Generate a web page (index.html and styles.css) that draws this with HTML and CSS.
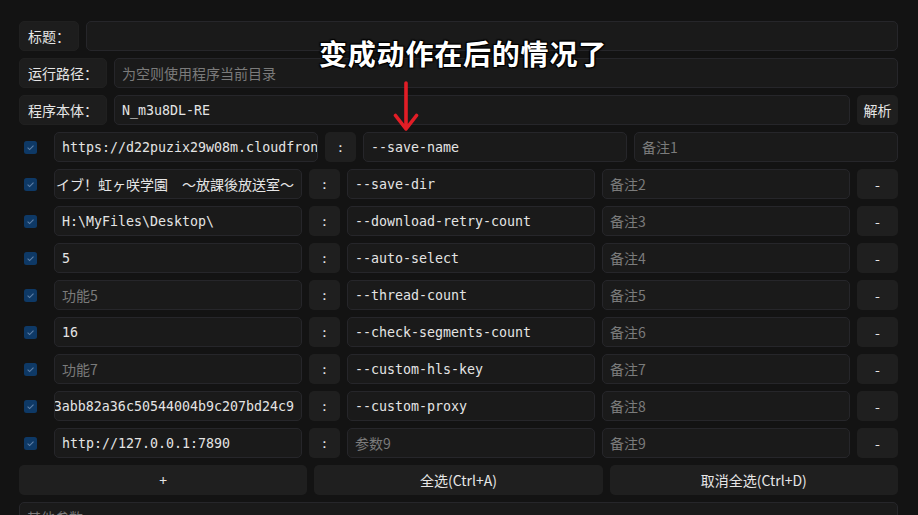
FILE: index.html
```html
<!DOCTYPE html>
<html lang="zh">
<head>
<meta charset="utf-8">
<link rel="stylesheet" href="styles.css">
</head>
<body>
<div class="app">
  <div class="row">
    <div class="label">标题：</div>
    <div class="field"></div>
  </div>
  <div class="row">
    <div class="label">运行路径：</div>
    <div class="field ph">为空则使用程序当前目录</div>
  </div>
  <div class="row">
    <div class="label">程序本体：</div>
    <div class="field mono">N_m3u8DL-RE</div>
    <div class="btn side">解析</div>
  </div>

  <div class="row">
    <div class="check"><svg width="13" height="13" viewBox="0 0 13 13"><rect width="13" height="13" rx="2.5" fill="#0e3966"/><path d="M3.6 6.7 L5.6 8.6 L9.5 4.6" fill="none" stroke="#5f80a8" stroke-width="1.1"/></svg></div>
    <div class="field mono">https://d22puzix29w08m.cloudfront.net/</div>
    <div class="btn colon">:</div>
    <div class="field mono">--save-name</div>
    <div class="field ph">备注1</div>
  </div>
  <div class="row">
    <div class="check"><svg width="13" height="13" viewBox="0 0 13 13"><rect width="13" height="13" rx="2.5" fill="#0e3966"/><path d="M3.6 6.7 L5.6 8.6 L9.5 4.6" fill="none" stroke="#5f80a8" stroke-width="1.1"/></svg></div>
    <div class="field end"><span class="cjk">ラブライブ！虹ヶ咲学園　～放課後放送室～</span></div>
    <div class="btn colon">:</div>
    <div class="field mono">--save-dir</div>
    <div class="field ph">备注2</div>
    <div class="btn side">-</div>
  </div>
  <div class="row">
    <div class="check"><svg width="13" height="13" viewBox="0 0 13 13"><rect width="13" height="13" rx="2.5" fill="#0e3966"/><path d="M3.6 6.7 L5.6 8.6 L9.5 4.6" fill="none" stroke="#5f80a8" stroke-width="1.1"/></svg></div>
    <div class="field mono">H:\MyFiles\Desktop\</div>
    <div class="btn colon">:</div>
    <div class="field mono">--download-retry-count</div>
    <div class="field ph">备注3</div>
    <div class="btn side">-</div>
  </div>
  <div class="row">
    <div class="check"><svg width="13" height="13" viewBox="0 0 13 13"><rect width="13" height="13" rx="2.5" fill="#0e3966"/><path d="M3.6 6.7 L5.6 8.6 L9.5 4.6" fill="none" stroke="#5f80a8" stroke-width="1.1"/></svg></div>
    <div class="field mono">5</div>
    <div class="btn colon">:</div>
    <div class="field mono">--auto-select</div>
    <div class="field ph">备注4</div>
    <div class="btn side">-</div>
  </div>
  <div class="row">
    <div class="check"><svg width="13" height="13" viewBox="0 0 13 13"><rect width="13" height="13" rx="2.5" fill="#0e3966"/><path d="M3.6 6.7 L5.6 8.6 L9.5 4.6" fill="none" stroke="#5f80a8" stroke-width="1.1"/></svg></div>
    <div class="field ph">功能5</div>
    <div class="btn colon">:</div>
    <div class="field mono">--thread-count</div>
    <div class="field ph">备注5</div>
    <div class="btn side">-</div>
  </div>
  <div class="row">
    <div class="check"><svg width="13" height="13" viewBox="0 0 13 13"><rect width="13" height="13" rx="2.5" fill="#0e3966"/><path d="M3.6 6.7 L5.6 8.6 L9.5 4.6" fill="none" stroke="#5f80a8" stroke-width="1.1"/></svg></div>
    <div class="field mono">16</div>
    <div class="btn colon">:</div>
    <div class="field mono">--check-segments-count</div>
    <div class="field ph">备注6</div>
    <div class="btn side">-</div>
  </div>
  <div class="row">
    <div class="check"><svg width="13" height="13" viewBox="0 0 13 13"><rect width="13" height="13" rx="2.5" fill="#0e3966"/><path d="M3.6 6.7 L5.6 8.6 L9.5 4.6" fill="none" stroke="#5f80a8" stroke-width="1.1"/></svg></div>
    <div class="field ph">功能7</div>
    <div class="btn colon">:</div>
    <div class="field mono">--custom-hls-key</div>
    <div class="field ph">备注7</div>
    <div class="btn side">-</div>
  </div>
  <div class="row">
    <div class="check"><svg width="13" height="13" viewBox="0 0 13 13"><rect width="13" height="13" rx="2.5" fill="#0e3966"/><path d="M3.6 6.7 L5.6 8.6 L9.5 4.6" fill="none" stroke="#5f80a8" stroke-width="1.1"/></svg></div>
    <div class="field mono end"><span>3abb82a36c50544004b9c207bd24c9</span></div>
    <div class="btn colon">:</div>
    <div class="field mono">--custom-proxy</div>
    <div class="field ph">备注8</div>
    <div class="btn side">-</div>
  </div>
  <div class="row">
    <div class="check"><svg width="13" height="13" viewBox="0 0 13 13"><rect width="13" height="13" rx="2.5" fill="#0e3966"/><path d="M3.6 6.7 L5.6 8.6 L9.5 4.6" fill="none" stroke="#5f80a8" stroke-width="1.1"/></svg></div>
    <div class="field mono">http://127.0.0.1:7890</div>
    <div class="btn colon">:</div>
    <div class="field ph">参数9</div>
    <div class="field ph">备注9</div>
    <div class="btn side">-</div>
  </div>

  <div class="row">
    <div class="btn wide">+</div>
    <div class="btn wide">全选(Ctrl+A)</div>
    <div class="btn wide">取消全选(Ctrl+D)</div>
  </div>
  <div class="row">
    <div class="field ph">其他参数</div>
  </div>

  <div class="note">变成动作在后的情况了</div>
  <svg class="arrow" width="28" height="54" viewBox="0 0 28 54"><path d="M13 3 L13 49 M2.5 35.5 L13 49 L23.5 35.5" fill="none" stroke="#e21d26" stroke-width="3.6" stroke-linecap="round" stroke-linejoin="round"/></svg>
</div>
</body>
</html>
```
FILE: styles.css
```css
html, body {
  margin: 0;
  background: #131313;
  overflow: hidden;
}
.app {
  position: relative;
  padding: 21px 20px 0 19px;
  display: flex;
  flex-direction: column;
  gap: 7px;
  font-family: "Noto Sans CJK SC", "Noto Sans", sans-serif;
  font-size: 14px;
  color: #e6e6e6;
}
.row {
  display: flex;
  gap: 7px;
  height: 30px;
}
.label {
  flex: none;
  box-sizing: border-box;
  background: #1d1d1d;
  border: 1px solid #202020;
  border-radius: 5px;
  padding: 0 8px;
  display: flex;
  align-items: center;
  white-space: nowrap;
}
.field {
  flex: 1;
  min-width: 0;
  box-sizing: border-box;
  background: #1a1a1a;
  border: 1px solid #26262a;
  border-radius: 5px;
  padding: 0 7px;
  display: flex;
  align-items: center;
  overflow: hidden;
  white-space: nowrap;
}
.field.end {
  justify-content: flex-end;
}
.field.end > span {
  flex: none;
}
.ph {
  color: #7b7b7b;
}
.mono {
  font-family: "DejaVu Sans Mono", "Noto Sans CJK SC", monospace;
  font-size: 13.3px;
  color: #e4e4e4;
}
.cjk {
  font-family: "Noto Sans CJK JP", sans-serif;
  font-size: 14px;
}
.btn {
  box-sizing: border-box;
  background: #1f1f1f;
  border-radius: 5px;
  display: flex;
  align-items: center;
  justify-content: center;
  white-space: nowrap;
}
.side {
  flex: none;
  width: 41px;
}
.colon {
  flex: none;
  width: 31px;
  font-family: "DejaVu Sans Mono", monospace;
  font-size: 13px;
}
.wide {
  flex: 1;
}
.check {
  flex: none;
  width: 28px;
  box-sizing: border-box;
  padding-left: 5px;
  display: flex;
  align-items: center;
}
.check svg {
  display: block;
}
.note {
  position: absolute;
  left: 319px;
  top: 33px;
  font-size: 28px;
  font-weight: 700;
  letter-spacing: 0.8px;
  color: #ffffff;
  white-space: nowrap;
  text-shadow: 0 0 2px #000, 1px 1px 1px #000, -1px -1px 1px #000, 1px -1px 1px #000, -1px 1px 1px #000;
}
.arrow {
  position: absolute;
  left: 393px;
  top: 80px;
}
```
